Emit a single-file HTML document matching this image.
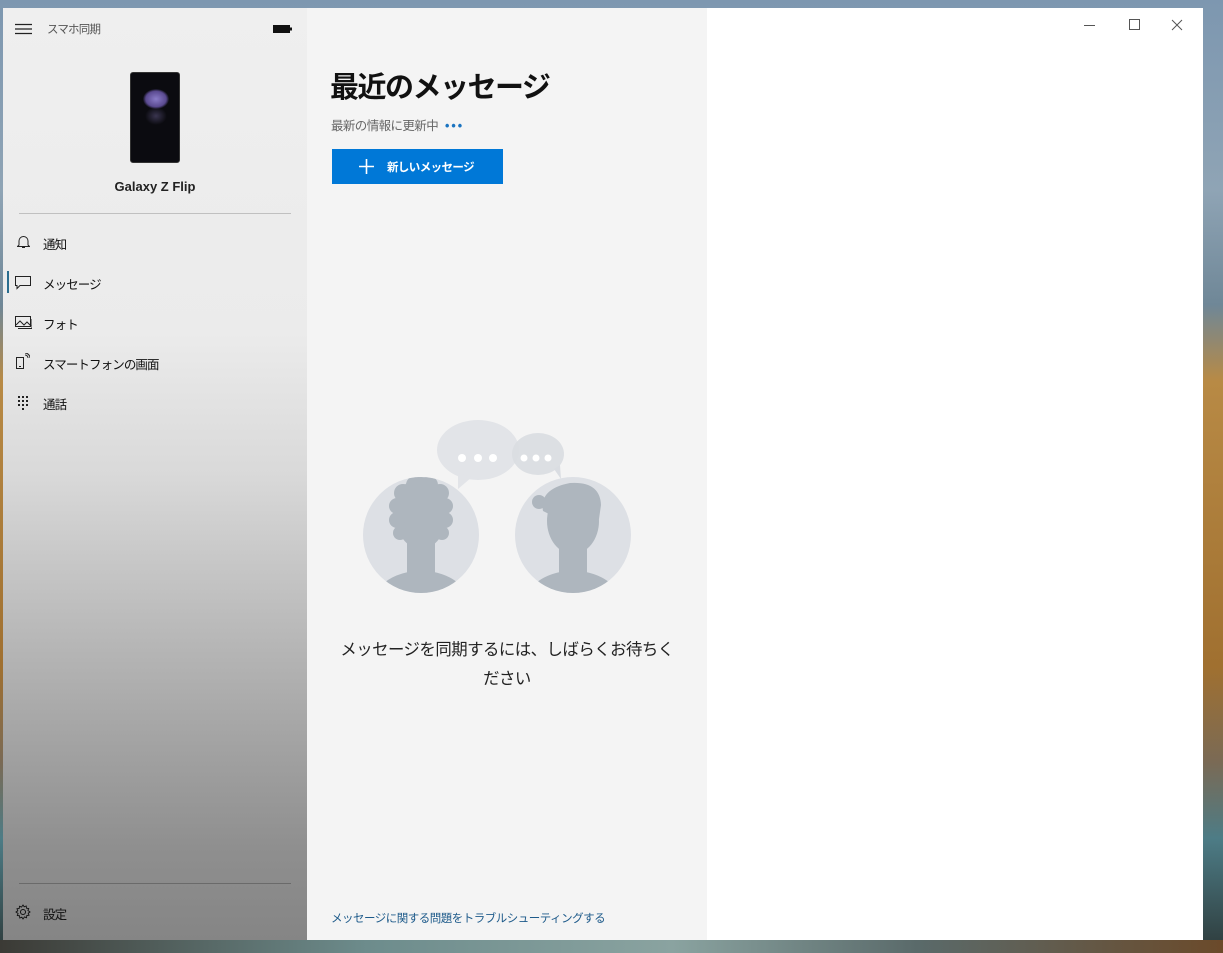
<!DOCTYPE html>
<html><head><meta charset="utf-8"><style>
*{margin:0;padding:0;box-sizing:border-box}
html,body{width:1223px;height:953px;overflow:hidden}
body{position:relative;font-family:"Liberation Sans","Noto Sans CJK JP",sans-serif;
background:linear-gradient(180deg,#7d97b0 0%,#8fa4b5 20%,#6f8797 32%,#b88a45 40%,#a07030 70%,#7a6a55 80%,#4d7c86 88%,#2d3a3a 100%);}
.bottom{position:absolute;left:0;top:940px;width:1223px;height:13px;background:linear-gradient(90deg,#3b3a35,#6d8c8c 30%,#8aa3a0 55%,#5a6a6a 75%,#6b4a2a 100%)}
.win{position:absolute;left:3px;top:8px;width:1200px;height:932px;background:#fff;overflow:hidden}
.side{position:absolute;left:0;top:0;width:304px;height:932px;background:linear-gradient(180deg,#efefef 0%,#ebebeb 35%,#d9d9d9 50%,#b3b3b3 70%,#8f8f8f 90%,#858585 100%)}
.mid{position:absolute;left:304px;top:0;width:400px;height:932px;background:#f4f4f4}
.t{position:absolute;white-space:nowrap}
.nav{position:absolute;left:40px;font-size:12.5px;letter-spacing:-0.9px;color:#111}
.ic{position:absolute}
</style></head><body>
<div class="bottom"></div>
<div class="win">
 <div class="side">
  <svg class="ic" style="left:12px;top:15px" width="17" height="12"><path d="M0 1.5H17M0 6H17M0 10.5H17" stroke="#222" stroke-width="1.2"/></svg>
  <div class="t" style="left:44px;top:13px;font-size:11.5px;letter-spacing:-0.8px;color:#555">スマホ同期</div>
  <svg class="ic" style="left:270px;top:16px" width="20" height="10"><rect x="0.5" y="1.5" width="16" height="7" fill="#111" stroke="#111"/><rect x="17" y="3.5" width="2" height="3" fill="#111"/></svg>
  <div style="position:absolute;left:127px;top:64px;width:50px;height:91px;background:#0b0b10;border-radius:3px;border:1px solid #333">
   <div style="position:absolute;left:12px;top:16px;width:26px;height:20px;border-radius:50%;background:radial-gradient(#8a7cc8,#5a4a90 55%,transparent 72%)"></div>
   <div style="position:absolute;left:14px;top:34px;width:22px;height:18px;border-radius:50%;background:radial-gradient(#3a3550,transparent 70%)"></div>
  </div>
  <div class="t" style="left:0;width:304px;text-align:center;top:171px;font-size:13px;font-weight:bold;color:#222">Galaxy Z Flip</div>
  <div style="position:absolute;left:16px;top:205px;width:272px;height:1px;background:#c0c0c0"></div>
  <svg class="ic" style="left:14px;top:227px" width="13" height="14"><path d="M2 10V6a4.5 4.5 0 0 1 9 0v4l1.5 1.5H0.5z M5 12.5h3" fill="none" stroke="#222" stroke-width="1"/></svg>
  <div class="nav" style="top:226px">通知</div>
  <div style="position:absolute;left:4px;top:263px;width:2px;height:22px;background:#2a6d8f"></div>
  <svg class="ic" style="left:12px;top:268px" width="16" height="14"><path d="M0.5 0.5H15.5V9.5H5L2 12.5V9.5H0.5Z" fill="none" stroke="#222" stroke-width="1"/></svg>
  <div class="nav" style="top:266px">メッセージ</div>
  <svg class="ic" style="left:12px;top:308px" width="17" height="13"><rect x="0.5" y="0.5" width="15" height="10" fill="none" stroke="#222"/><path d="M1 9l4-4 4 4 3-3 4 4M3 12.5h14V3" fill="none" stroke="#222"/></svg>
  <div class="nav" style="top:306px">フォト</div>
  <svg class="ic" style="left:13px;top:345px" width="14" height="17"><rect x="0.5" y="4.5" width="7" height="11" fill="none" stroke="#222"/><path d="M3 13.5h2M9 2a3 3 0 0 1 3 3M9 0a5 5 0 0 1 5 5" fill="none" stroke="#222"/></svg>
  <div class="nav" style="top:346px">スマートフォンの画面</div>
  <svg class="ic" style="left:14px;top:387px" width="12" height="15"><g fill="#222"><rect x="1" y="1" width="2" height="2"/><rect x="5" y="1" width="2" height="2"/><rect x="9" y="1" width="2" height="2"/><rect x="1" y="5" width="2" height="2"/><rect x="5" y="5" width="2" height="2"/><rect x="9" y="5" width="2" height="2"/><rect x="1" y="9" width="2" height="2"/><rect x="5" y="9" width="2" height="2"/><rect x="9" y="9" width="2" height="2"/><rect x="5" y="13" width="2" height="2"/></g></svg>
  <div class="nav" style="top:386px">通話</div>
  <div style="position:absolute;left:16px;top:875px;width:272px;height:1px;background:#6a6a6a"></div>
  <svg class="ic" style="left:12px;top:896px" width="16" height="16" viewBox="0 0 16 16"><circle cx="8" cy="8" r="2.5" fill="none" stroke="#111"/><path d="M8 1l1.2 1.8 2-.8.3 2.2 2.2.3-.8 2L15 8l-1.8 1.2.8 2-2.2.3-.3 2.2-2-.8L8 15l-1.2-1.8-2 .8-.3-2.2-2.2-.3.8-2L1 8l1.8-1.2-.8-2 2.2-.3.3-2.2 2 .8z" fill="none" stroke="#111" stroke-width="0.9"/></svg>
  <div class="nav" style="top:896px">設定</div>
 </div>
 <div class="mid">
  <div class="t" style="left:23px;top:56px;font-size:29px;font-weight:bold;color:#111;letter-spacing:-1.5px">最近のメッセージ</div>
  <div class="t" style="left:24px;top:107px;font-size:12.5px;letter-spacing:-0.6px;color:#666">最新の情報に更新中 <span style="color:#1a73c0;font-weight:bold;letter-spacing:2px;margin-left:4px">•••</span></div>
  <div style="position:absolute;left:25px;top:141px;width:171px;height:35px;background:#0078d7;color:#fff;font-size:11.5px;letter-spacing:-0.6px;font-weight:bold">
   <svg style="position:absolute;left:27px;top:10px" width="15" height="15"><path d="M7.5 0V15M0 7.5H15" stroke="#fff" stroke-width="1.6"/></svg>
   <span style="position:absolute;left:55px;top:10px">新しいメッセージ</span>
  </div>
  <svg style="position:absolute;left:50px;top:405px" width="290" height="185" viewBox="0 0 290 185">
   <ellipse cx="121" cy="37" rx="41" ry="30" fill="#e2e4e8"/><path d="M101 60l0 16 14-12z" fill="#e2e4e8"/>
   <ellipse cx="181" cy="41" rx="26" ry="21" fill="#dadde2" opacity="0.95"/><path d="M197 56l7 10-1-14z" fill="#dadde2"/>
   <g fill="#fff"><circle cx="105" cy="45" r="4"/><circle cx="121" cy="45" r="4"/><circle cx="136" cy="45" r="4"/><circle cx="167" cy="45" r="3.5"/><circle cx="179" cy="45" r="3.5"/><circle cx="191" cy="45" r="3.5"/></g>
   <defs><clipPath id="c1"><circle cx="64" cy="122" r="58"/></clipPath><clipPath id="c2"><circle cx="216" cy="122" r="58"/></clipPath></defs>
   <circle cx="64" cy="122" r="58" fill="#dde0e5"/><circle cx="216" cy="122" r="58" fill="#dde0e5"/>
   <g clip-path="url(#c1)" fill="#aeb6be"><path d="M18 185q6-24 46-28 40 4 46 28z"/><rect x="50" y="128" width="28" height="34"/><ellipse cx="64" cy="100" rx="26" ry="36"/><circle cx="46" cy="80" r="9"/><circle cx="58" cy="72" r="9"/><circle cx="72" cy="72" r="9"/><circle cx="83" cy="80" r="9"/><circle cx="40" cy="93" r="8"/><circle cx="88" cy="93" r="8"/><circle cx="40" cy="107" r="8"/><circle cx="88" cy="107" r="8"/><circle cx="43" cy="120" r="7"/><circle cx="85" cy="120" r="7"/></g>
   <g clip-path="url(#c2)" fill="#aeb6be"><path d="M170 185q6-24 46-28 40 4 46 28z"/><rect x="202" y="128" width="28" height="34"/><ellipse cx="216" cy="108" rx="26" ry="33"/><path d="M186 98q-4-22 27-28 30-2 31 22l-2 14q-20-14-44-2z"/><circle cx="182" cy="89" r="7"/></g>
  </svg>
  <div class="t" style="left:0;width:400px;text-align:center;top:628px;font-size:16.4px;letter-spacing:-0.5px;line-height:29px;color:#222">メッセージを同期するには、しばらくお待ちく<br>ださい</div>
  <div class="t" style="left:24px;top:902px;font-size:11.5px;letter-spacing:-0.5px;color:#1d5a8a">メッセージに関する問題をトラブルシューティングする</div>
 </div>
 <svg style="position:absolute;left:1078px;top:10px" width="110" height="14"><path d="M3 7.5H14" stroke="#555"/><rect x="48.5" y="1.5" width="10" height="10" fill="none" stroke="#555"/><path d="M91 2l10 10M101 2l-10 10" stroke="#555"/></svg>
</div>
</body></html>
